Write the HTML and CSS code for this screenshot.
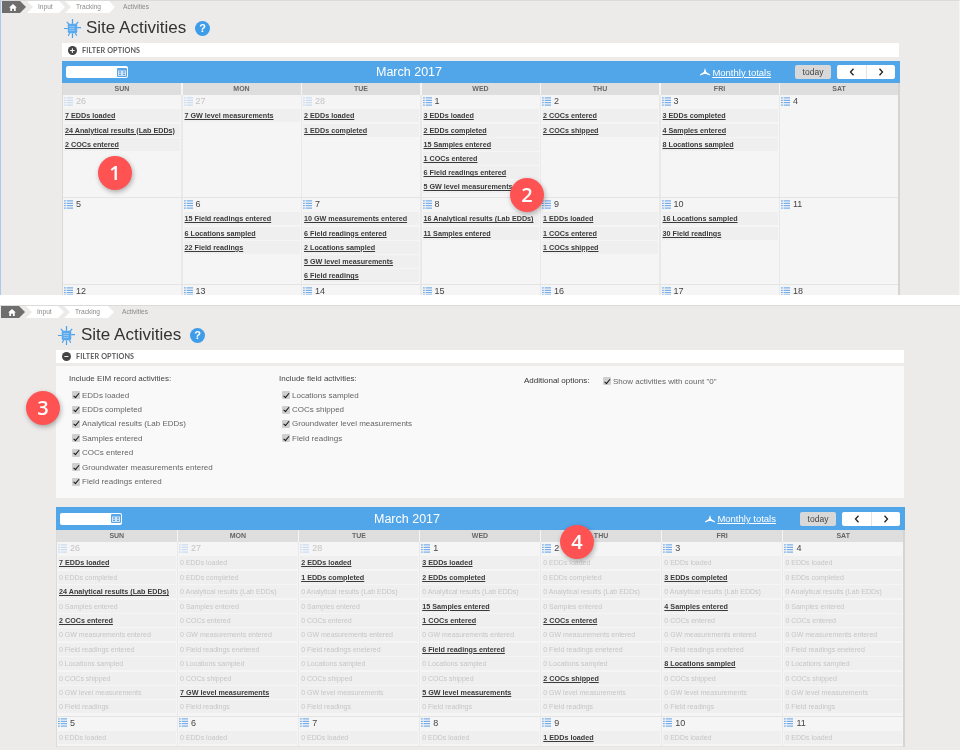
FILE: index.html
```html
<!DOCTYPE html>
<html lang="en">
<head>
<meta charset="UTF-8" />
<title>Site Activities</title>
<link rel="stylesheet" href="styles.css">
</head>
<body>

<svg class="sprite" width="0" height="0">
  <symbol id="list" viewBox="0 0 10 9">
    <path d="M0 0.5h2M3 0.5h7M0 3.2h2M3 3.2h7M0 5.8h2M3 5.8h7M0 8.5h2M3 8.5h7" stroke="#5b9fea" stroke-width="1.1" fill="none"/>
  </symbol>
  <symbol id="site" viewBox="0 0 18 20">
    <path d="M9 0v5M3 3l2.500 3M15 3l-2.500 3M0 10h4M14 9h4M9 15v5M6 15l-1.500 2.500M12 15l1.500 2.500" stroke="#4aa3ea" stroke-width="1.300" fill="none"/>
    <rect x="4" y="5" width="10" height="10" rx="1.500" fill="#5aa9ee"/>
    <path d="M6 8h6M6 10h6M6 12h6" stroke="#d4e8fa" stroke-width="1" stroke-dasharray="1 1" fill="none"/>
  </symbol>
  <symbol id="tree" viewBox="0 0 10 8">
    <path d="M5 0l1.200 4 3.800 2.500v1l-4-1.500h-2l-4 1.500v-1l3.800-2.500z" fill="#fff"/>
  </symbol>
  <symbol id="cal" viewBox="0 0 10 9">
    <rect width="10" height="9" rx="1" fill="#5aa6ea"/>
    <rect x="1" y="2.500" width="8" height="5.500" fill="#cfe4f8"/>
    <path d="M2 4h2M6 4h2M2 6.300h2M6 6.300h2" stroke="#3f8fdc" stroke-width="1" fill="none"/>
  </symbol>
  <symbol id="home" viewBox="0 0 10 9">
    <path d="M5 0l5 4.500h-1.500v4.500h-2.300v-3h-2.400v3h-2.300v-4.500h-1.500z" fill="#fff"/>
  </symbol>
  <symbol id="prev" viewBox="0 0 6 8">
    <path d="M4.500 0.700l-3 3.300 3 3.300" stroke="#222" stroke-width="1.300" fill="none"/>
  </symbol>
  <symbol id="next" viewBox="0 0 6 8">
    <path d="M1.500 0.700l3 3.300-3 3.300" stroke="#222" stroke-width="1.300" fill="none"/>
  </symbol>
</svg>

<section class="shot shot-a">
  <nav class="crumbs">
    <span class="crumb-home"><svg class="home-icon"><use href="#home"/></svg></span>
    <span class="crumb crumb-input">Input</span>
    <span class="crumb crumb-tracking">Tracking</span>
    <span class="crumb-last">Activities</span>
  </nav>
  <div class="content">
    <div class="page-title">
      <svg class="site-icon"><use href="#site"/></svg>
      <h1>Site Activities</h1>
      <span class="help">?</span>
    </div>
    <div class="filter-bar"><span class="toggle">+</span>FILTER OPTIONS</div>
    <div class="calendar">
      <div class="cal-head">
        <div class="date-box"><svg class="cal-icon"><use href="#cal"/></svg></div>
        <div class="cal-title">March 2017</div>
        <div class="cal-tools">
          <svg class="tree-icon"><use href="#tree"/></svg>
          <a class="totals">Monthly totals</a>
          <button class="today">today</button>
          <div class="nav-btns"><button><svg class="chev"><use href="#prev"/></svg></button><button><svg class="chev"><use href="#next"/></svg></button></div>
        </div>
      </div>
      <div class="week dow"><div>SUN</div><div>MON</div><div>TUE</div><div>WED</div><div>THU</div><div>FRI</div><div>SAT</div></div>
      <div class="week week-tall">
        <div class="cell">
          <div class="day past"><svg class="list-icon"><use href="#list"/></svg>26</div>
          <a class="ev">7 EDDs loaded</a>
          <a class="ev">24 Analytical results (Lab EDDs)</a>
          <a class="ev">2 COCs entered</a>
        </div>
        <div class="cell">
          <div class="day past"><svg class="list-icon"><use href="#list"/></svg>27</div>
          <a class="ev">7 GW level measurements</a>
        </div>
        <div class="cell">
          <div class="day past"><svg class="list-icon"><use href="#list"/></svg>28</div>
          <a class="ev">2 EDDs loaded</a>
          <a class="ev">1 EDDs completed</a>
        </div>
        <div class="cell">
          <div class="day"><svg class="list-icon"><use href="#list"/></svg>1</div>
          <a class="ev">3 EDDs loaded</a>
          <a class="ev">2 EDDs completed</a>
          <a class="ev">15 Samples entered</a>
          <a class="ev">1 COCs entered</a>
          <a class="ev">6 Field readings entered</a>
          <a class="ev">5 GW level measurements</a>
        </div>
        <div class="cell">
          <div class="day"><svg class="list-icon"><use href="#list"/></svg>2</div>
          <a class="ev">2 COCs entered</a>
          <a class="ev">2 COCs shipped</a>
        </div>
        <div class="cell">
          <div class="day"><svg class="list-icon"><use href="#list"/></svg>3</div>
          <a class="ev">3 EDDs completed</a>
          <a class="ev">4 Samples entered</a>
          <a class="ev">8 Locations sampled</a>
        </div>
        <div class="cell">
          <div class="day"><svg class="list-icon"><use href="#list"/></svg>4</div>
        </div>
      </div>
      <div class="week week-mid">
        <div class="cell">
          <div class="day"><svg class="list-icon"><use href="#list"/></svg>5</div>
        </div>
        <div class="cell">
          <div class="day"><svg class="list-icon"><use href="#list"/></svg>6</div>
          <a class="ev">15 Field readings entered</a>
          <a class="ev">6 Locations sampled</a>
          <a class="ev">22 Field readings</a>
        </div>
        <div class="cell">
          <div class="day"><svg class="list-icon"><use href="#list"/></svg>7</div>
          <a class="ev">10 GW measurements entered</a>
          <a class="ev">6 Field readings entered</a>
          <a class="ev">2 Locations sampled</a>
          <a class="ev">5 GW level measurements</a>
          <a class="ev">6 Field readings</a>
        </div>
        <div class="cell">
          <div class="day"><svg class="list-icon"><use href="#list"/></svg>8</div>
          <a class="ev">16 Analytical results (Lab EDDs)</a>
          <a class="ev">11 Samples entered</a>
        </div>
        <div class="cell">
          <div class="day"><svg class="list-icon"><use href="#list"/></svg>9</div>
          <a class="ev">1 EDDs loaded</a>
          <a class="ev">1 COCs entered</a>
          <a class="ev">1 COCs shipped</a>
        </div>
        <div class="cell">
          <div class="day"><svg class="list-icon"><use href="#list"/></svg>10</div>
          <a class="ev">16 Locations sampled</a>
          <a class="ev">30 Field readings</a>
        </div>
        <div class="cell">
          <div class="day"><svg class="list-icon"><use href="#list"/></svg>11</div>
        </div>
      </div>
      <div class="week">
        <div class="cell"><div class="day"><svg class="list-icon"><use href="#list"/></svg>12</div></div>
        <div class="cell"><div class="day"><svg class="list-icon"><use href="#list"/></svg>13</div></div>
        <div class="cell"><div class="day"><svg class="list-icon"><use href="#list"/></svg>14</div></div>
        <div class="cell"><div class="day"><svg class="list-icon"><use href="#list"/></svg>15</div></div>
        <div class="cell"><div class="day"><svg class="list-icon"><use href="#list"/></svg>16</div></div>
        <div class="cell"><div class="day"><svg class="list-icon"><use href="#list"/></svg>17</div></div>
        <div class="cell"><div class="day"><svg class="list-icon"><use href="#list"/></svg>18</div></div>
      </div>
    </div>
  </div>
  <span class="badge badge-1">1</span>
  <span class="badge badge-2">2</span>
</section>

<section class="shot shot-b">
  <nav class="crumbs">
    <span class="crumb-home"><svg class="home-icon"><use href="#home"/></svg></span>
    <span class="crumb crumb-input">Input</span>
    <span class="crumb crumb-tracking">Tracking</span>
    <span class="crumb-last">Activities</span>
  </nav>
  <div class="content">
    <div class="page-title">
      <svg class="site-icon"><use href="#site"/></svg>
      <h1>Site Activities</h1>
      <span class="help">?</span>
    </div>
    <div class="filter-bar"><span class="toggle">&minus;</span>FILTER OPTIONS</div>
    <div class="filter-body">
      <div class="filter-col col-eim">
        <h4>Include EIM record activities:</h4>
        <label><input type="checkbox" checked>EDDs loaded</label>
        <label><input type="checkbox" checked>EDDs completed</label>
        <label><input type="checkbox" checked>Analytical results (Lab EDDs)</label>
        <label><input type="checkbox" checked>Samples entered</label>
        <label><input type="checkbox" checked>COCs entered</label>
        <label><input type="checkbox" checked>Groundwater measurements entered</label>
        <label><input type="checkbox" checked>Field readings entered</label>
      </div>
      <div class="filter-col col-field">
        <h4>Include field activities:</h4>
        <label><input type="checkbox" checked>Locations sampled</label>
        <label><input type="checkbox" checked>COCs shipped</label>
        <label><input type="checkbox" checked>Groundwater level measurements</label>
        <label><input type="checkbox" checked>Field readings</label>
      </div>
      <div class="filter-extra">
        <h4>Additional options:</h4>
        <label><input type="checkbox" checked>Show activities with count "0"</label>
      </div>
    </div>
    <div class="calendar">
      <div class="cal-head">
        <div class="date-box"><svg class="cal-icon"><use href="#cal"/></svg></div>
        <div class="cal-title">March 2017</div>
        <div class="cal-tools">
          <svg class="tree-icon"><use href="#tree"/></svg>
          <a class="totals">Monthly totals</a>
          <button class="today">today</button>
          <div class="nav-btns"><button><svg class="chev"><use href="#prev"/></svg></button><button><svg class="chev"><use href="#next"/></svg></button></div>
        </div>
      </div>
      <div class="week dow"><div>SUN</div><div>MON</div><div>TUE</div><div>WED</div><div>THU</div><div>FRI</div><div>SAT</div></div>
      <div class="week">
        <div class="cell">
          <div class="day past"><svg class="list-icon"><use href="#list"/></svg>26</div>
          <a class="ev">7 EDDs loaded</a>
          <span class="ev zero">0 EDDs completed</span>
          <a class="ev">24 Analytical results (Lab EDDs)</a>
          <span class="ev zero">0 Samples entered</span>
          <a class="ev">2 COCs entered</a>
          <span class="ev zero">0 GW measurements entered</span>
          <span class="ev zero">0 Field readings entered</span>
          <span class="ev zero">0 Locations sampled</span>
          <span class="ev zero">0 COCs shipped</span>
          <span class="ev zero">0 GW level measurements</span>
          <span class="ev zero">0 Field readings</span>
        </div>
        <div class="cell">
          <div class="day past"><svg class="list-icon"><use href="#list"/></svg>27</div>
          <span class="ev zero">0 EDDs loaded</span>
          <span class="ev zero">0 EDDs completed</span>
          <span class="ev zero">0 Analytical results (Lab EDDs)</span>
          <span class="ev zero">0 Samples entered</span>
          <span class="ev zero">0 COCs entered</span>
          <span class="ev zero">0 GW measurements entered</span>
          <span class="ev zero">0 Field readings enetered</span>
          <span class="ev zero">0 Locations sampled</span>
          <span class="ev zero">0 COCs shipped</span>
          <a class="ev">7 GW level measurements</a>
          <span class="ev zero">0 Field readings</span>
        </div>
        <div class="cell">
          <div class="day past"><svg class="list-icon"><use href="#list"/></svg>28</div>
          <a class="ev">2 EDDs loaded</a>
          <a class="ev">1 EDDs completed</a>
          <span class="ev zero">0 Analytical results (Lab EDDs)</span>
          <span class="ev zero">0 Samples entered</span>
          <span class="ev zero">0 COCs entered</span>
          <span class="ev zero">0 GW measurements entered</span>
          <span class="ev zero">0 Field readings enetered</span>
          <span class="ev zero">0 Locations sampled</span>
          <span class="ev zero">0 COCs shipped</span>
          <span class="ev zero">0 GW level measurements</span>
          <span class="ev zero">0 Field readings</span>
        </div>
        <div class="cell">
          <div class="day"><svg class="list-icon"><use href="#list"/></svg>1</div>
          <a class="ev">3 EDDs loaded</a>
          <a class="ev">2 EDDs completed</a>
          <span class="ev zero">0 Analytical results (Lab EDDs)</span>
          <a class="ev">15 Samples entered</a>
          <a class="ev">1 COCs entered</a>
          <span class="ev zero">0 GW measurements entered</span>
          <a class="ev">6 Field readings entered</a>
          <span class="ev zero">0 Locations sampled</span>
          <span class="ev zero">0 COCs shipped</span>
          <a class="ev">5 GW level measurements</a>
          <span class="ev zero">0 Field readings</span>
        </div>
        <div class="cell">
          <div class="day"><svg class="list-icon"><use href="#list"/></svg>2</div>
          <span class="ev zero">0 EDDs loaded</span>
          <span class="ev zero">0 EDDs completed</span>
          <span class="ev zero">0 Analytical results (Lab EDDs)</span>
          <span class="ev zero">0 Samples entered</span>
          <a class="ev">2 COCs entered</a>
          <span class="ev zero">0 GW measurements entered</span>
          <span class="ev zero">0 Field readings enetered</span>
          <span class="ev zero">0 Locations sampled</span>
          <a class="ev">2 COCs shipped</a>
          <span class="ev zero">0 GW level measurements</span>
          <span class="ev zero">0 Field readings</span>
        </div>
        <div class="cell">
          <div class="day"><svg class="list-icon"><use href="#list"/></svg>3</div>
          <span class="ev zero">0 EDDs loaded</span>
          <a class="ev">3 EDDs completed</a>
          <span class="ev zero">0 Analytical results (Lab EDDs)</span>
          <a class="ev">4 Samples entered</a>
          <span class="ev zero">0 COCs entered</span>
          <span class="ev zero">0 GW measurements entered</span>
          <span class="ev zero">0 Field readings enetered</span>
          <a class="ev">8 Locations sampled</a>
          <span class="ev zero">0 COCs shipped</span>
          <span class="ev zero">0 GW level measurements</span>
          <span class="ev zero">0 Field readings</span>
        </div>
        <div class="cell">
          <div class="day"><svg class="list-icon"><use href="#list"/></svg>4</div>
          <span class="ev zero">0 EDDs loaded</span>
          <span class="ev zero">0 EDDs completed</span>
          <span class="ev zero">0 Analytical results (Lab EDDs)</span>
          <span class="ev zero">0 Samples entered</span>
          <span class="ev zero">0 COCs entered</span>
          <span class="ev zero">0 GW measurements entered</span>
          <span class="ev zero">0 Field readings enetered</span>
          <span class="ev zero">0 Locations sampled</span>
          <span class="ev zero">0 COCs shipped</span>
          <span class="ev zero">0 GW level measurements</span>
          <span class="ev zero">0 Field readings</span>
        </div>
      </div>
      <div class="week">
        <div class="cell"><div class="day"><svg class="list-icon"><use href="#list"/></svg>5</div><span class="ev zero">0 EDDs loaded</span></div>
        <div class="cell"><div class="day"><svg class="list-icon"><use href="#list"/></svg>6</div><span class="ev zero">0 EDDs loaded</span></div>
        <div class="cell"><div class="day"><svg class="list-icon"><use href="#list"/></svg>7</div><span class="ev zero">0 EDDs loaded</span></div>
        <div class="cell"><div class="day"><svg class="list-icon"><use href="#list"/></svg>8</div><span class="ev zero">0 EDDs loaded</span></div>
        <div class="cell"><div class="day"><svg class="list-icon"><use href="#list"/></svg>9</div><a class="ev">1 EDDs loaded</a></div>
        <div class="cell"><div class="day"><svg class="list-icon"><use href="#list"/></svg>10</div><span class="ev zero">0 EDDs loaded</span></div>
        <div class="cell"><div class="day"><svg class="list-icon"><use href="#list"/></svg>11</div><span class="ev zero">0 EDDs loaded</span></div>
      </div>
    </div>
  </div>
  <span class="badge badge-3">3</span>
  <span class="badge badge-4">4</span>
</section>

</body>
</html>
```

FILE: styles.css
```css
body {
  margin: 0;
  background: #fff;
  font-family: "Liberation Sans", Arial, sans-serif;
  color: #3a3a3a;
  overflow: hidden;
}
.sprite {
  position: absolute;
}
.shot {
  position: relative;
  overflow: hidden;
  background: #ecebea;
  box-sizing: border-box;
  border-top: 1px solid #dcdbda;
  filter: blur(0.4px);
}
.shot-a {
  height: 295px;
  margin-bottom: 10px;
  border-left: 1px solid #a9c8ee;
  border-right: 1px solid #f5f5f5;
  --indent: 61px;
  --gap: 1.2px;
}
.shot-b {
  height: 445px;
  --indent: 56px;
  --gap: 1.4px;
}

/* breadcrumb */
.crumbs {
  display: flex;
  height: 12px;
  font-size: 6.6px;
  line-height: 12px;
  color: #8a8a8a;
}
.crumb-home {
  display: flex;
  align-items: center;
  width: 24px;
  padding-left: 7px;
  box-sizing: border-box;
  margin-left: 1px;
  background: #6e6e6e;
  clip-path: polygon(0 0, 75% 0, 100% 50%, 75% 100%, 0 100%);
}
.home-icon {
  width: 8px;
  height: 7px;
}
.crumb {
  background: #fff;
  box-sizing: border-box;
  clip-path: polygon(0 0, calc(100% - 6px) 0, 100% 50%, calc(100% - 6px) 100%, 0 100%, 6px 50%);
}
.crumb-input {
  width: 38px;
  padding-left: 11px;
  margin-left: 1px;
}
.crumb-tracking {
  width: 50px;
  padding-left: 11px;
}
.crumb-last {
  padding-left: 8px;
}

/* title and filter */
.content {
  margin-left: var(--indent);
  margin-right: 59px;
}
.shot-b .content {
  margin-right: 55px;
}
.page-title {
  display: flex;
  align-items: center;
  height: 30px;
}
.shot-b .page-title {
  margin-top: 2px;
}
.site-icon {
  width: 17px;
  height: 19px;
  margin: 0 5px 0 2px;
}
.shot-b .site-icon {
  margin-right: 6px;
}
h1 {
  margin: 0 9px 0 0;
  font-size: 17px;
  font-weight: normal;
  color: #333;
}
.help {
  width: 15px;
  height: 15px;
  line-height: 15px;
  border-radius: 50%;
  background: #3f9ce8;
  color: #fff;
  font-size: 11px;
  font-weight: bold;
  text-align: center;
}
.filter-bar {
  display: flex;
  align-items: center;
  height: 14px;
  margin-right: 1px;
  background: #fff;
  font-family: Lato, sans-serif;
  font-size: 7.2px;
  font-weight: bold;
  letter-spacing: 0.15px;
  color: #5a5a5a;
}
.shot-b .filter-bar {
  height: 13px;
}
.toggle {
  width: 9px;
  height: 9px;
  line-height: 9px;
  margin: 0 5px 0 6px;
  border-radius: 50%;
  background: #444;
  color: #fff;
  font-size: 9px;
  text-align: center;
}
.filter-body {
  display: flex;
  height: 132px;
  margin-top: 3px;
  margin-right: 1px;
  padding: 6px 0 0 13px;
  box-sizing: border-box;
  background: #f9f9f9;
  font-size: 8px;
  color: #666;
}
h4 {
  margin: 0;
  font-size: 8px;
  font-weight: normal;
  color: #444;
  line-height: 14px;
  padding-bottom: 2px;
}
.filter-body label {
  display: flex;
  align-items: center;
  height: 14.4px;
  padding-left: 3px;
}
.filter-body input {
  appearance: none;
  position: relative;
  width: 8px;
  height: 8px;
  margin: 0 2px 0 0;
  border-radius: 1px;
  background: #cfcfcf;
}
.filter-body input::after {
  content: "";
  position: absolute;
  left: 2.6px;
  top: 0.4px;
  width: 2px;
  height: 4.500px;
  border: solid #111;
  border-width: 0 1.3px 1.3px 0;
  transform: rotate(40deg);
}
.col-eim {
  width: 210px;
}
.col-field {
  width: 245px;
}
.filter-extra {
  display: flex;
  align-items: flex-start;
  padding-top: 2px;
}
.filter-extra h4 {
  width: 79px;
  padding: 0;
  color: #333;
}
.filter-extra label {
  padding: 0;
}

/* calendar */
.calendar {
  margin-top: 4px;
  border-right: 2px solid #d4d4d4;
  border-left: 1px solid #dadada;
  background: #f5f5f5;
}
.shot-b .calendar {
  margin-top: 9px;
}
.cal-head {
  display: flex;
  align-items: center;
  height: 22px;
  margin-left: -1px;
  margin-right: -2px;
  background: #51a5e9;
  color: #fff;
}
.shot-b .cal-head {
  height: 23px;
}
.date-box {
  display: flex;
  justify-content: flex-end;
  align-items: center;
  width: 62px;
  height: 12px;
  margin-left: 4px;
  padding-right: 1px;
  box-sizing: border-box;
  border-radius: 2px;
  background: #fff;
}
.cal-icon {
  width: 10px;
  height: 9px;
}
.cal-title {
  margin-left: 248px;
  font-size: 12.5px;
}
.shot-b .cal-title {
  margin-left: 252px;
}
.cal-tools {
  display: flex;
  align-items: center;
  margin-left: auto;
  margin-right: 5px;
}
.tree-icon {
  width: 10px;
  height: 8px;
  margin-right: 2px;
}
.totals {
  font-size: 9.500px;
  text-decoration: underline;
  margin-right: 24px;
}
button {
  font-family: inherit;
  padding: 0;
  border: 0;
}
.today {
  width: 36px;
  height: 14px;
  margin-right: 6px;
  border-radius: 2px;
  background: #d8d8d8;
  color: #444;
  font-size: 8.5px;
}
.nav-btns {
  display: flex;
  height: 14px;
  border-radius: 2px;
  background: #fff;
}
.nav-btns button {
  display: flex;
  justify-content: center;
  align-items: center;
  width: 29px;
  background: none;
}
.nav-btns button + button {
  border-left: 1px solid #e4e4e4;
}
.chev {
  width: 6px;
  height: 8px;
}
.week {
  display: grid;
  grid-template-columns: repeat(7, 1fr);
  gap: 0 1.500px;
  background: #e9e9e9;
  border-bottom: 1px solid #e4e4e4;
}
.week-tall {
  height: 102px;
}
.week-mid {
  height: 86px;
}
.dow {
  height: 12px;
  line-height: 12px;
  background: #f5f5f5;
  border: 0;
  font-size: 7px;
  font-weight: bold;
  color: #666;
  text-align: center;
}
.dow div {
  background: #dedede;
}
.cell {
  background: #f5f5f5;
  padding: 0 1px;
}
.shot-b .cell {
  padding-bottom: 1px;
}
.day {
  display: flex;
  align-items: center;
  height: 14.4px;
  padding-bottom: 2.4px;
  box-sizing: border-box;
  font-size: 9px;
  color: #444;
}
.day.past {
  color: #c4c4c4;
}
.day.past .list-icon {
  opacity: 0.35;
}
.list-icon {
  width: 9px;
  height: 9px;
  margin: 0 3px 0 0;
}
.ev {
  display: block;
  height: 13px;
  line-height: 13px;
  margin-bottom: var(--gap);
  padding-left: 1px;
  background: #efefef;
  font-size: 7.2px;
  font-weight: bold;
  white-space: nowrap;
  overflow: hidden;
  color: #3a3a3a;
  text-decoration: underline;
}
.ev.zero {
  font-size: 7px;
  font-weight: normal;
  color: #c6c6c6;
  text-decoration: none;
}

/* numbered callouts */
.badge {
  position: absolute;
  width: 34px;
  height: 34px;
  line-height: 34px;
  border-radius: 50%;
  background: #ff5252;
  color: #fff;
  font-family: "Open Sans", sans-serif;
  font-size: 20px;
  font-weight: 600;
  text-align: center;
  box-shadow: 1px 2px 5px rgba(0,0,0,0.3);
}
.badge-1 { left: 97px; top: 155px; }
.badge-2 { left: 509px; top: 177px; }
.badge-3 { left: 26px; top: 85px; }
.badge-4 { left: 560px; top: 219px; }
```
